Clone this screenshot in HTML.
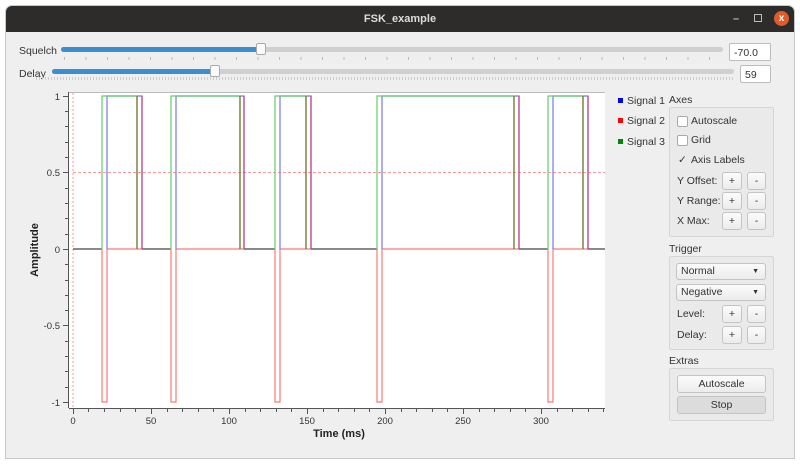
<!DOCTYPE html>
<html><head><style>
*{margin:0;padding:0;box-sizing:border-box}
body{width:800px;height:464px;background:#fff;font-family:"Liberation Sans",sans-serif;font-size:10.5px;color:#333;position:relative;overflow:hidden}
.win{position:absolute;left:5px;top:5px;width:790px;height:454px;background:#efefef;border:1px solid #c8c8c8;border-radius:7px 7px 0 0;overflow:hidden}
.tb{position:absolute;left:0;top:0;width:100%;height:26px;background:#2d2c2b;color:#ddd;font-weight:bold;font-size:11px;text-align:center;line-height:26px}
.abs{position:absolute}
.btn{position:absolute;background:linear-gradient(#fbfbfb,#ececec);border:1px solid #c4c4c4;border-radius:3px;text-align:center;font-size:10.5px;color:#333}
.grp{position:absolute;border:1px solid #d6d6d6;background:#eaeaea;border-radius:2px}
.cb{position:absolute;width:11px;height:11px;border:1px solid #aaa;background:#fff;border-radius:2px}
</style></head><body>
<div class="win">
<div class="tb">FSK_example
<span class="abs" style="left:727px;top:0;color:#bbb">–</span>
<span class="abs" style="left:748px;top:8px;width:8px;height:8px;border:1px solid #bbb"></span>
<span class="abs" style="left:768px;top:5px;width:15px;height:15px;border-radius:50%;background:#e05a2a;color:#fff;line-height:15px;font-size:10px">x</span>
</div>
</div>
<div class="abs" style="left:19px;top:45px">Squelch</div>
<div class="abs" style="left:61px;top:47px;width:662px;height:5px;background:#d0d0d0;border-radius:3px"></div>
<div class="abs" style="left:61px;top:47px;width:200px;height:5px;background:#3b8fd0;border-radius:3px"></div>
<div class="abs" style="left:256px;top:43px;width:10px;height:12px;background:#fafafa;border:1px solid #aaa;border-radius:2px"></div>
<div class="abs" style="left:64px;top:57px;width:658px;height:3px;background:repeating-linear-gradient(90deg,#bbb 0 1px,transparent 1px 21.5px)"></div>
<div class="abs" style="left:729px;top:43px;width:42px;height:18px;background:#fff;border:1px solid #bbb;border-radius:2px;padding:3px 0 0 4px">-70.0</div>
<div class="abs" style="left:19px;top:68px">Delay</div>
<div class="abs" style="left:52px;top:69px;width:682px;height:5px;background:#d0d0d0;border-radius:3px"></div>
<div class="abs" style="left:52px;top:69px;width:163px;height:5px;background:#3b8fd0;border-radius:3px"></div>
<div class="abs" style="left:210px;top:65px;width:10px;height:12px;background:#fafafa;border:1px solid #aaa;border-radius:2px"></div>
<div class="abs" style="left:36px;top:77px;width:697px;height:3px;background:repeating-linear-gradient(90deg,#ccc 0 1px,transparent 1px 3px)"></div>
<div class="abs" style="left:740px;top:65px;width:31px;height:18px;background:#fff;border:1px solid #bbb;border-radius:2px;padding:3px 0 0 4px">59</div>

<svg class="abs" style="left:0;top:0" width="800" height="464">
<rect x="69" y="92" width="536" height="316" fill="#fff"/>
<line x1="69" y1="92.5" x2="605" y2="92.5" stroke="#bbb"/>
<g stroke="#555" stroke-width="1">
<line x1="68.5" y1="92" x2="68.5" y2="408"/>
<line x1="69" y1="408.5" x2="605" y2="408.5"/>
</g>
<g stroke="#555">
<path d="M63 96.5h5M63 172.5h5M63 249.5h5M63 325.5h5M63 402.5h5"/>
<path d="M65 111.5h3M65 126.5h3M65 142.5h3M65 157.5h3M65 188.5h3M65 203.5h3M65 218.5h3M65 234.5h3M65 264.5h3M65 280.5h3M65 295.5h3M65 310.5h3M65 341.5h3M65 356.5h3M65 371.5h3M65 387.5h3"/>
<path d="M73.5 409v5M151.5 409v5M229.5 409v5M307.5 409v5M385.5 409v5M463.5 409v5M541.5 409v5"/>
<path d="M88.5 409v3M104.5 409v3M120.5 409v3M135.5 409v3M167.5 409v3M182.5 409v3M198.5 409v3M213.5 409v3M245.5 409v3M260.5 409v3M276.5 409v3M291.5 409v3M323.5 409v3M338.5 409v3M354.5 409v3M369.5 409v3M401.5 409v3M416.5 409v3M432.5 409v3M447.5 409v3M479.5 409v3M494.5 409v3M510.5 409v3M525.5 409v3M557.5 409v3M572.5 409v3M588.5 409v3M603.5 409v3"/>
</g>
<line x1="73" y1="93" x2="73" y2="408" stroke="#f99" stroke-dasharray="2,2"/>
<line x1="73" y1="172.5" x2="605" y2="172.5" stroke="#f99" stroke-dasharray="3,2"/>
<g fill="none" stroke-width="1.2">
<path d="M73 249H102M142 249H171M244 249H275M311 249H377M519 249H548M588 249H605" stroke="#444"/>
<path d="M102 249V402H107V249H142M171 249V402H176V249H244M275 249V402H280V249H311M377 249V402H382V249H519M548 249V402H553V249H588" stroke="#f77"/>
<path d="M107 249V96H142V249M176 249V96H244V249M280 249V96H311V249M382 249V96H519V249M553 249V96H588V249" stroke="#77e"/>
<path d="M142 96V249M244 96V249M311 96V249M519 96V249M588 96V249" stroke="#c4407a"/>
<path d="M102 249V96H137V249M171 249V96H240V249M275 249V96H306V249M377 249V96H514V249M548 249V96H583V249" stroke="#6c6" />
<path d="M137 96V249M240 96V249M306 96V249M514 96V249M583 96V249" stroke="#776a2a"/>
</g>
<g font-size="9.5" fill="#333" font-family="Liberation Sans">
<text x="60" y="100" text-anchor="end">1</text>
<text x="60" y="176" text-anchor="end">0.5</text>
<text x="60" y="253" text-anchor="end">0</text>
<text x="60" y="329" text-anchor="end">-0.5</text>
<text x="60" y="406" text-anchor="end">-1</text>
<g text-anchor="middle">
<text x="73" y="424">0</text><text x="151" y="424">50</text><text x="229" y="424">100</text><text x="307" y="424">150</text><text x="385" y="424">200</text><text x="463" y="424">250</text><text x="541" y="424">300</text>
</g>
</g>
<text x="339" y="437" text-anchor="middle" font-size="11" font-weight="bold" fill="#222" font-family="Liberation Sans">Time (ms)</text>
<text transform="translate(38,250) rotate(-90)" text-anchor="middle" font-size="11" font-weight="bold" fill="#222" font-family="Liberation Sans">Amplitude</text>
<rect x="618" y="98" width="5" height="5" fill="#00f"/>
<rect x="618" y="118" width="5" height="5" fill="#f00"/>
<rect x="618" y="139" width="5" height="5" fill="#080"/>
</svg>
<div class="abs" style="left:627px;top:95px">Signal 1</div>
<div class="abs" style="left:627px;top:115px">Signal 2</div>
<div class="abs" style="left:627px;top:136px">Signal 3</div>

<div class="abs" style="left:669px;top:94px">Axes</div>
<div class="grp" style="left:669px;top:107px;width:105px;height:130px"></div>
<div class="cb" style="left:677px;top:116px"></div><div class="abs" style="left:691px;top:115px">Autoscale</div>
<div class="cb" style="left:677px;top:135px"></div><div class="abs" style="left:691px;top:134px">Grid</div>
<div class="abs" style="left:678px;top:154px">✓</div><div class="abs" style="left:691px;top:154px">Axis Labels</div>
<div class="abs" style="left:677px;top:175px">Y Offset:</div>
<div class="btn" style="left:722px;top:172px;width:20px;height:18px;line-height:16px">+</div>
<div class="btn" style="left:747px;top:172px;width:19px;height:18px;line-height:16px">-</div>
<div class="abs" style="left:677px;top:195px">Y Range:</div>
<div class="btn" style="left:722px;top:192px;width:20px;height:18px;line-height:16px">+</div>
<div class="btn" style="left:747px;top:192px;width:19px;height:18px;line-height:16px">-</div>
<div class="abs" style="left:677px;top:215px">X Max:</div>
<div class="btn" style="left:722px;top:212px;width:20px;height:18px;line-height:16px">+</div>
<div class="btn" style="left:747px;top:212px;width:19px;height:18px;line-height:16px">-</div>

<div class="abs" style="left:669px;top:243px">Trigger</div>
<div class="grp" style="left:669px;top:256px;width:105px;height:94px"></div>
<div class="btn" style="left:676px;top:263px;width:90px;height:17px;line-height:15px;text-align:left;padding-left:4px">Normal<span style="position:absolute;right:6px;font-size:7px">▼</span></div>
<div class="btn" style="left:676px;top:284px;width:90px;height:17px;line-height:15px;text-align:left;padding-left:4px">Negative<span style="position:absolute;right:6px;font-size:7px">▼</span></div>
<div class="abs" style="left:677px;top:308px">Level:</div>
<div class="btn" style="left:722px;top:305px;width:20px;height:18px;line-height:16px">+</div>
<div class="btn" style="left:747px;top:305px;width:19px;height:18px;line-height:16px">-</div>
<div class="abs" style="left:677px;top:329px">Delay:</div>
<div class="btn" style="left:722px;top:326px;width:20px;height:18px;line-height:16px">+</div>
<div class="btn" style="left:747px;top:326px;width:19px;height:18px;line-height:16px">-</div>

<div class="abs" style="left:669px;top:355px">Extras</div>
<div class="grp" style="left:669px;top:368px;width:105px;height:53px"></div>
<div class="btn" style="left:677px;top:375px;width:89px;height:18px;line-height:16px">Autoscale</div>
<div class="btn" style="left:677px;top:396px;width:89px;height:18px;line-height:16px;background:#dcdcdc">Stop</div>
</body></html>
